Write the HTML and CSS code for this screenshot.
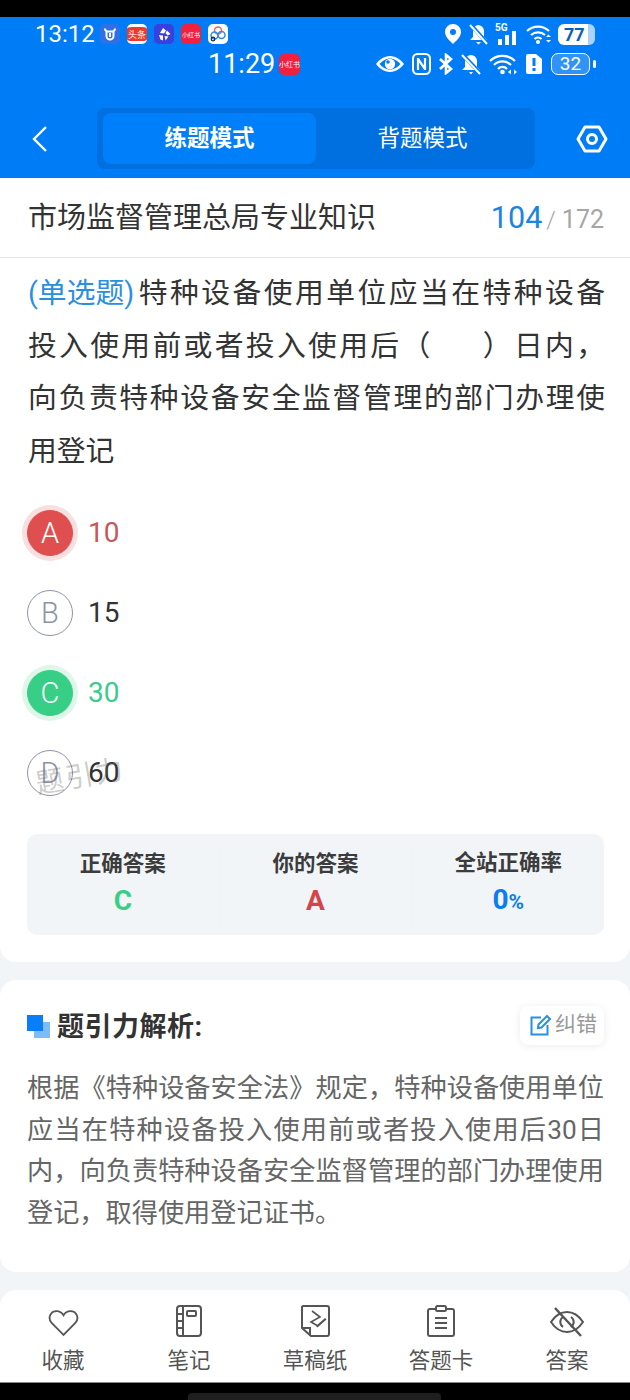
FILE: index.html
```html
<!DOCTYPE html>
<html lang="zh-CN">
<head>
    <meta charset="UTF-8">
    <meta name="viewport" content="width=device-width, initial-scale=1.0">
    <link rel="stylesheet" href="styles.css">
    <title>练题模式</title>
</head>
<body>
    <div class="notch"></div>

    <div class="app-header">
        <div class="status-row">
            <span class="time-main">13:12</span>
            <div class="app-icons">
                <span class="app-icon app-shield">
                    <svg width="14" height="14" viewBox="0 0 14 14"><path d="M2 1.500c0 2 1 2.500 2 2.800M12 1.500c0 2-1 2.500-2 2.800M3.500 4.500h7v4.500a3.500 3.500 0 0 1-7 0z M7 6v4" fill="none" stroke="#fff" stroke-width="2"/></svg>
                </span>
                <span class="app-icon app-news"><b>头条</b></span>
                <span class="app-icon app-star">
                    <svg width="15" height="15" viewBox="0 0 15 15"><path d="M6 1l3 2.500-2 3-4-.5zM10 3.500l3.500 3.500-3 1.500-2-2.500zM2 8l4 .5 0 5-2.500-1zM7.500 9l4 .5-3 4z" fill="#fff"/></svg>
                </span>
                <span class="app-icon app-red">小红书</span>
                <span class="app-icon app-rings">
                    <svg width="20" height="20" viewBox="0 0 20 20"><circle cx="10" cy="6.500" r="3.500" fill="none" stroke="#e4675f" stroke-width="1.500"/><circle cx="13.500" cy="11" r="3.500" fill="none" stroke="#2d8ee8" stroke-width="1.500"/><circle cx="6.500" cy="11.500" r="3.500" fill="none" stroke="#2d8ee8" stroke-width="1.500"/><circle cx="5" cy="15" r="1.800" fill="none" stroke="#222" stroke-width="1.200"/></svg>
                </span>
            </div>
            <div class="sys-icons sys-top">
                <svg width="18" height="22" viewBox="0 0 18 22"><path fill-rule="evenodd" d="M9 1a8 8 0 0 1 8 8c0 5-5 9-8 12-3-3-8-7-8-12a8 8 0 0 1 8-8zm0 5a3 3 0 1 0 0 6 3 3 0 0 0 0-6z" fill="#fff"/></svg>
                <svg width="21" height="22" viewBox="0 0 21 22"><path d="M10 2a6 6 0 0 1 6 6v6l3 3H2l3-3V8a6 6 0 0 1 5-6zM8 19h5l-2.500 2.500z" fill="#fff"/><path d="M2 1l17 19" stroke="#007cf7" stroke-width="4"/><path d="M2 2l17 19" stroke="#fff" stroke-width="2"/></svg>
                <svg width="25" height="24" viewBox="0 0 25 24"><path d="M3 17h4v6H3zM10 13h4v10h-4zM17 9h4v14h-4z" fill="#fff"/><text x="0" y="9" class="five-g">5G</text></svg>
                <svg width="26" height="22" viewBox="0 0 26 22"><path d="M1 8a16 16 0 0 1 22 0M5 12a10.500 10.500 0 0 1 14 0M8.500 16a5 5 0 0 1 7 0" fill="none" stroke="#fff" stroke-width="2.200"/><circle cx="12" cy="19" r="2" fill="#fff"/><path d="M20 14l2.500-2.500 2.500 2.500zM20 17l2.500 2.500L25 17z" fill="#fff"/></svg>
                <span class="battery-full"><span class="battery-fill">77</span></span>
            </div>
        </div>

        <div class="status-row status-second">
            <span class="time-second">11:29</span>
            <span class="app-icon app-red app-red-big">小红书</span>
            <div class="sys-icons sys-bottom">
                <svg width="28" height="20" viewBox="0 0 28 20"><path fill-rule="evenodd" d="M14 2c6 0 11 4 14 8-3 4-8 8-14 8S3 14 0 10c3-4 8-8 14-8zM14 4.500c-4 0-8 2.500-10.500 5.500C6 13 10 15.500 14 15.500s8-2.500 10.500-5.500C22 7 18 4.500 14 4.500z" fill="#fff"/><circle cx="14" cy="10" r="5.200" fill="#fff"/><circle cx="12" cy="8" r="1.800" fill="#007cf7"/></svg>
                <svg width="19" height="22" viewBox="0 0 19 22"><rect x="1" y="1" width="17" height="20" rx="4.500" fill="none" stroke="#fff" stroke-width="2"/><path d="M6 5v12M13 5v12M6 6l7 10" fill="none" stroke="#fff" stroke-width="2.200"/></svg>
                <svg width="14" height="22" viewBox="0 0 14 22"><path d="M1 6l11 10-5 4V2l5 4L1 16" fill="none" stroke="#fff" stroke-width="2.600"/></svg>
                <svg width="20" height="22" viewBox="0 0 20 22"><path d="M10 2a6 6 0 0 1 6 6v6l3 3H1l3-3V8a6 6 0 0 1 6-6zM8 19h4l-2 2.500z" fill="#fff"/><path d="M1 1l18 19" stroke="#007cf7" stroke-width="4"/><path d="M1 2l18 19" stroke="#fff" stroke-width="2"/></svg>
                <svg width="28" height="22" viewBox="0 0 28 22"><path d="M1 8a18 18 0 0 1 25 0M5 12a12 12 0 0 1 17 0M9 16a6 6 0 0 1 9 0" fill="none" stroke="#fff" stroke-width="2.200"/><circle cx="13.500" cy="19" r="2.300" fill="#fff"/><path d="M19 19l3-2.500v5zM28 19l-3-2.500v5z" fill="#fff"/></svg>
                <svg width="18" height="22" viewBox="0 0 18 22"><path fill-rule="evenodd" d="M3 1h8l6 5v13a2 2 0 0 1-2 2H3a2 2 0 0 1-2-2V3a2 2 0 0 1 2-2zM7.500 5v8h3V5zM7.500 15v3h3v-3z" fill="#fff"/></svg>
                <span class="battery-outline">32</span>
            </div>
        </div>

        <div class="nav-row">
            <svg class="back-icon" width="18" height="28" viewBox="0 0 18 28"><path d="M15 2L3 14l12 12" fill="none" stroke="#fff" stroke-width="2.400"/></svg>
            <div class="mode-tabs">
                <div class="mode-tab mode-active">练题模式</div>
                <div class="mode-tab">背题模式</div>
            </div>
            <svg class="settings-icon" width="32" height="28" viewBox="0 0 32 28"><path d="M9 2h14l7 12-7 12H9L2 14z" fill="none" stroke="#fff" stroke-width="3" stroke-linejoin="round"/><circle cx="16" cy="14" r="4.500" fill="none" stroke="#fff" stroke-width="3"/></svg>
        </div>
    </div>

    <div class="card question-card">
        <div class="title-row">
            <span class="subject">市场监督管理总局专业知识</span>
            <span class="progress"><span class="progress-now">104</span><span class="progress-slash">/</span><span class="progress-all">172</span></span>
        </div>

        <div class="question-text">
            <div class="question-line"><span class="question-type">(单选题)</span>特种设备使用单位应当在特种设备</div>
            <div class="question-line">投入使用前或者投入使用后（<span class="blank"></span>）日内，</div>
            <div class="question-line">向负责特种设备安全监督管理的部门办理使</div>
            <div>用登记</div>
        </div>

        <div class="options">
            <div class="option option-wrong"><span class="option-mark">A</span><span>10</span></div>
            <div class="option"><span class="option-mark">B</span><span>15</span></div>
            <div class="option option-right"><span class="option-mark">C</span><span>30</span></div>
            <div class="option option-last"><span class="option-mark">D</span><span>60</span><span class="watermark">题引力</span></div>
        </div>

        <div class="stats">
            <div class="stat">
                <div class="stat-label">正确答案</div>
                <div class="stat-value value-green">C</div>
            </div>
            <div class="stat">
                <div class="stat-label">你的答案</div>
                <div class="stat-value value-red">A</div>
            </div>
            <div class="stat">
                <div class="stat-label">全站正确率</div>
                <div class="stat-value value-blue">0<small>%</small></div>
            </div>
        </div>
    </div>

    <div class="card analysis-card">
        <div class="analysis-head">
            <span class="analysis-icon"></span>
            <h2>题引力解析:</h2>
            <div class="report-button">
                <svg width="21" height="21" viewBox="0 0 21 21"><path d="M11 2.500H1.500v17h16V10" fill="none" stroke="#2b8fe0" stroke-width="2"/><path d="M8 13l.5-3.500L17 1l3 3-8.500 8.500z" fill="none" stroke="#2b8fe0" stroke-width="2"/></svg>
                <span>纠错</span>
            </div>
        </div>
        <p class="analysis-text">根据《特种设备安全法》规定，特种设备使用单位应当在特种设备投入使用前或者投入使用后30日内，向负责特种设备安全监督管理的部门办理使用登记，取得使用登记证书。</p>
    </div>

    <div class="bottom-bar">
        <div class="bar-item">
            <svg width="31" height="28" viewBox="0 0 34 30"><path d="M17 28L4 15C-1 9 3 2 9.500 2c3.500 0 6 2 7.500 4.500C18.500 4 21 2 24.500 2 31 2 35 9 30 15z" fill="none" stroke="#555" stroke-width="2"/></svg>
            <span>收藏</span>
        </div>
        <div class="bar-item">
            <svg width="28" height="32" viewBox="0 0 28 32"><rect x="2" y="1" width="24" height="30" rx="3" fill="none" stroke="#555" stroke-width="2"/><path d="M8 1v30M2 9h6M2 16h6M2 23h6" fill="none" stroke="#555" stroke-width="2"/><rect x="12" y="6" width="9" height="5" rx="1" fill="none" stroke="#555" stroke-width="2"/></svg>
            <span>笔记</span>
        </div>
        <div class="bar-item">
            <svg width="30" height="32" viewBox="0 0 30 32"><path d="M3 1h24a2 2 0 0 1 2 2v26a2 2 0 0 1-2 2H11l-9-8V2z" fill="none" stroke="#555" stroke-width="2"/><path d="M2 23h8v8" fill="none" stroke="#555" stroke-width="2"/><path d="M12 6l8 6-9 5 7 4" fill="none" stroke="#555" stroke-width="1.600"/><path d="M16 21l9-8 1.500 1.500-9 8z" fill="#555"/></svg>
            <span>草稿纸</span>
        </div>
        <div class="bar-item">
            <svg width="28" height="32" viewBox="0 0 28 32"><path d="M8 4H3a2 2 0 0 0-2 2v23a2 2 0 0 0 2 2h22a2 2 0 0 0 2-2V6a2 2 0 0 0-2-2h-5" fill="none" stroke="#555" stroke-width="2"/><rect x="9" y="1" width="10" height="5" rx="1.500" fill="none" stroke="#555" stroke-width="2"/><path d="M8 13h12M8 18h12M8 23h12" stroke="#555" stroke-width="2"/></svg>
            <span>答题卡</span>
        </div>
        <div class="bar-item">
            <svg width="36" height="30" viewBox="0 0 36 30"><path d="M2 15c4-6 10-10 16-10s12 4 16 10c-4 6-10 10-16 10S6 21 2 15z" fill="none" stroke="#555" stroke-width="2"/><path d="M14 10a6 6 0 0 0 0 10M22 20a6 6 0 0 0 0-10" fill="none" stroke="#555" stroke-width="2"/><path d="M6 1l26 28" stroke="#555" stroke-width="2.400"/></svg>
            <span>答案</span>
        </div>
    </div>

    <div class="nav-strip"><div class="home-pill"></div></div>
</body>
</html>
```

FILE: styles.css
```css
body {
    font-family: Roboto, "Noto Sans CJK SC", sans-serif;
    margin: 0;
    padding: 0;
    width: 630px;
    height: 1400px;
    overflow: hidden;
    background-color: #f1f5f8;
}

.notch {
    height: 17px;
    background-color: #000;
}

/* blue header with the two status rows */
.app-header {
    height: 161px;
    background-color: #007cf7;
    color: #fff;
}

.status-row {
    display: flex;
    align-items: center;
    height: 34px;
    padding: 0 35px 0 35px;
}

.status-second {
    height: 24px;
    margin-top: 1px;
    padding-right: 34px;
    padding-left: 208px;
}

.time-main {
    font-size: 24px;
    width: 65px;
}

.time-second {
    font-size: 27px;
    width: 71px;
}

.app-icons {
    display: flex;
    gap: 7px;
}

.app-icon {
    display: flex;
    align-items: center;
    justify-content: center;
    width: 20px;
    height: 20px;
    border-radius: 5px;
    overflow: hidden;
}

.app-shield { background-color: #2f6fe8; }
.app-star { background-color: #3a3fe0; }
.app-rings { background-color: #fff; }

.app-news {
    background-color: #f0392b;
    border-top: 3px solid #fff;
    border-bottom: 3px solid #fff;
    height: 14px;
}

.app-news b {
    font-size: 9px;
    font-weight: 400;
    white-space: nowrap;
}

.app-red {
    background-color: #f0213f;
    font-size: 6px;
    white-space: nowrap;
}

.app-red-big {
    width: 21px;
    height: 21px;
    font-size: 7px;
}

.sys-icons {
    display: flex;
    align-items: center;
    margin-left: auto;
}

.sys-top { gap: 6px; }
.sys-bottom { gap: 8px; }

.five-g {
    font-size: 10px;
    font-weight: 700;
    fill: #fff;
}

.battery-full {
    display: block;
    width: 37px;
    height: 21px;
    border-radius: 6px;
    background: linear-gradient(to right, #fff 82%, #a9d3fc 82%);
}

.battery-fill {
    display: block;
    padding-left: 6px;
    font-size: 18px;
    font-weight: 700;
    line-height: 21px;
    color: #0a5fb8;
}

.battery-outline {
    display: block;
    width: 37px;
    height: 20px;
    border: 1.500px solid #fff;
    border-radius: 7px;
    background-color: #2f93f8;
    text-align: center;
    font-size: 19px;
    line-height: 20px;
    margin-right: 6px;
    position: relative;
}

.battery-outline::after {
    content: "";
    position: absolute;
    right: -7px;
    top: 6px;
    width: 3px;
    height: 8px;
    border-radius: 2px;
    background-color: #fff;
}

.nav-row {
    display: flex;
    align-items: center;
    height: 61px;
    margin-top: 32px;
    padding-left: 31px;
}

.mode-tabs {
    display: flex;
    width: 438px;
    height: 61px;
    margin-left: 48px;
    padding: 5px 6px;
    box-sizing: border-box;
    background-color: #006fdf;
    border-radius: 8px;
}

.mode-tab {
    width: 213px;
    line-height: 51px;
    text-align: center;
    font-size: 22.500px;
    border-radius: 8px;
}

.mode-active {
    background-color: #007ffb;
    font-weight: 700;
}

.settings-icon {
    margin-left: 41px;
}

.card {
    background-color: #fff;
    border-radius: 16px;
}

.question-card {
    height: 784px;
    border-radius: 0 0 16px 16px;
}

.title-row {
    display: flex;
    justify-content: space-between;
    align-items: center;
    height: 75px;
    padding: 0 26px 4px 28px;
    border-bottom: 1px solid #e6e6e6;
}

.subject {
    font-size: 29px;
    margin-top: -1px;
    color: #333;
}

.progress {
    display: flex;
    align-items: baseline;
    margin-top: 3px;
}

.progress-now {
    font-size: 30.500px;
    color: #1a84e2;
}

.progress-slash {
    margin: 0 6px 0 4px;
    font-size: 24px;
    font-weight: 300;
    color: #a6a6a6;
}

.progress-all {
    font-size: 25px;
    color: #a6a6a6;
}

.question-text {
    margin: 9px 25px 0 28px;
    font-size: 28.800px;
    line-height: 52.700px;
    color: #333;
}

/* every full line is stretched to both edges */
.question-line {
    text-align: justify;
    text-align-last: justify;
    white-space: nowrap;
}

.question-type {
    display: inline-block;
    color: #2b8fe0;
    margin-right: 2px;
}

.blank {
    display: inline-block;
    width: 48px;
}

.options {
    margin-top: 32px;
    padding-left: 27px;
}

.option {
    display: flex;
    align-items: center;
    gap: 15px;
    height: 46px;
    margin-bottom: 34px;
    font-size: 28px;
    color: #333;
}

.option-mark {
    display: flex;
    align-items: center;
    justify-content: center;
    width: 44px;
    height: 44px;
    border: 1px solid #8d92a5;
    border-radius: 50%;
    color: #8d92a5;
    font-size: 29px;
    font-weight: 300;
}

.option-wrong { color: #c8575a; }
.option-right { color: #3dca8c; }

.option-wrong .option-mark {
    background-color: #e04f50;
    border-color: #e04f50;
    color: #fff;
    box-shadow: 0 0 0 5px #f9dfe0;
}

.option-right .option-mark {
    background-color: #37ce85;
    border-color: #37ce85;
    color: #fff;
    box-shadow: 0 0 0 5px #def7ea;
}

.option-last {
    position: relative;
    margin-bottom: 0;
}

.watermark {
    position: absolute;
    left: 8px;
    top: 4px;
    font-size: 28px;
    letter-spacing: 2px;
    color: rgba(110, 110, 110, 0.35);
    transform: rotate(-10deg);
}

.stats {
    display: flex;
    align-items: center;
    height: 101px;
    padding-top: 3px;
    box-sizing: border-box;
    margin: 38px 26px 0 27px;
    background-color: #f1f5f8;
    border-radius: 10px;
}

.stat {
    flex: 1;
    text-align: center;
    border-right: 1px solid #eef1f5;
}

.stat:last-child {
    border-right: none;
}

.stat-label {
    font-size: 21.500px;
    font-weight: 700;
    line-height: 30px;
    color: #3c3c3c;
}

.stat-value {
    font-size: 28px;
    font-weight: 700;
    line-height: 44px;
}

.stat-value small {
    font-size: 21px;
}

.value-green { color: #37ce85; }
.value-red { color: #d8434a; }
.value-blue { color: #0a7ef0; }

.analysis-card {
    height: 292px;
    margin-top: 18px;
    padding: 0 26px 0 27px;
    box-sizing: border-box;
}

.analysis-head {
    display: flex;
    align-items: center;
    height: 39px;
    padding-top: 26px;
}

.analysis-icon {
    width: 16px;
    height: 16px;
    margin-right: 14px;
    background-color: #0a7ef9;
    box-shadow: 7px 7px 0 0 #7dbcfb;
    margin-bottom: 5px;
}

.analysis-head h2 {
    margin: 0 0 3px;
    font-size: 27px;
    font-weight: 700;
    letter-spacing: 0.500px;
    color: #333;
}

.report-button {
    display: flex;
    align-items: center;
    gap: 4px;
    width: 84px;
    height: 39px;
    margin-left: auto;
    padding-left: 3px;
    box-sizing: border-box;
    justify-content: center;
    background-color: #fff;
    border-radius: 8px;
    box-shadow: 0 1px 8px rgba(0, 0, 0, 0.08);
    font-size: 21px;
    line-height: 32px;
    color: #9a9a9a;
}

.report-button span {
    margin-bottom: 4px;
}

.analysis-text {
    margin: 23px 0 0;
    font-size: 26.200px;
    line-height: 41.700px;
    text-align: justify;
    color: #666;
}

.bottom-bar {
    display: flex;
    height: 92px;
    margin-top: 18px;
    background-color: #fff;
    border-radius: 16px 16px 0 0;
}

.bar-item {
    flex: 1;
    display: flex;
    flex-direction: column;
    align-items: center;
    justify-content: flex-end;
    gap: 6px;
    height: 84px;
    font-size: 21.500px;
    color: #555;
}

.nav-strip {
    height: 18px;
    background-color: #000;
    border-top: 1px solid #888;
    box-sizing: border-box;
    padding: 10px 0 0 188px;
}

.home-pill {
    width: 253px;
    height: 7px;
    border-radius: 4px 4px 0 0;
    background-color: #1f1f1f;
}
```
